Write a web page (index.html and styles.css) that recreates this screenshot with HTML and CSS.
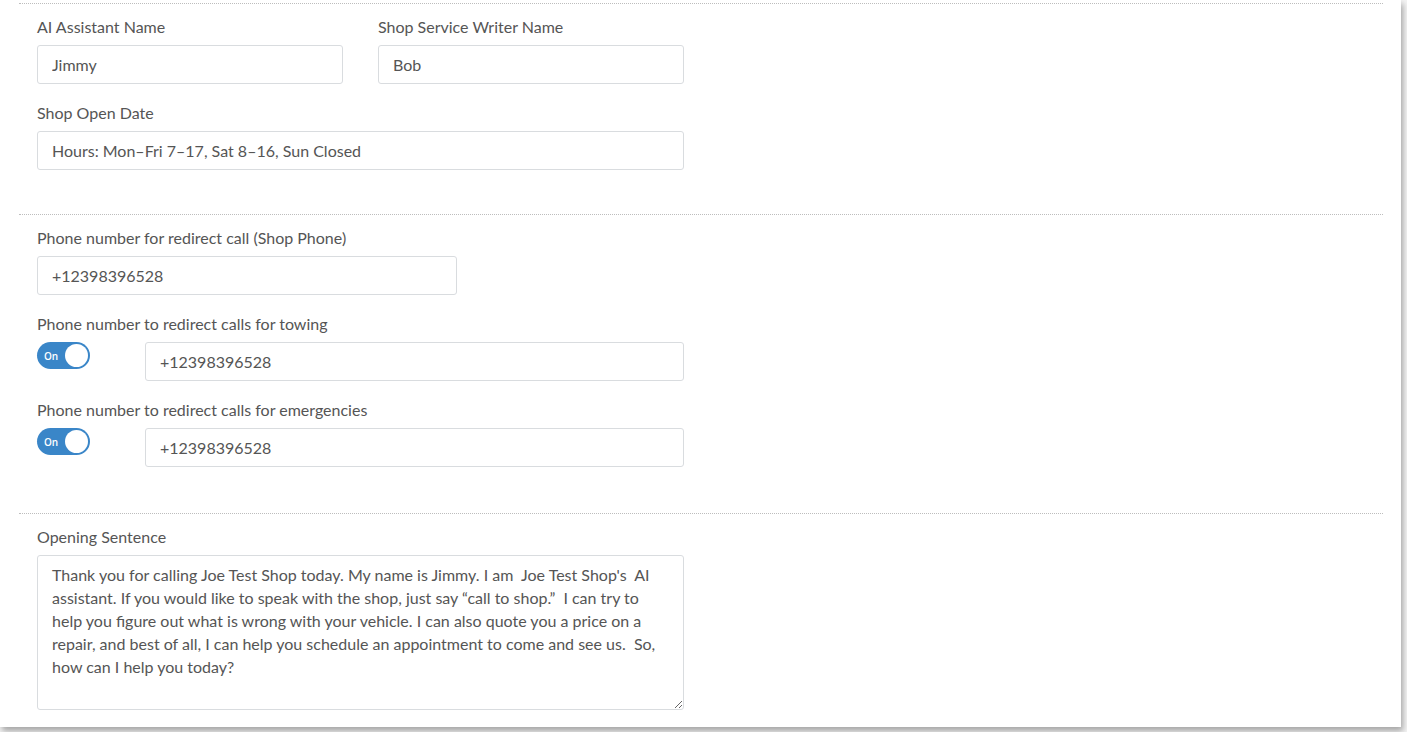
FILE: index.html
```html
<!DOCTYPE html>
<html lang="en">
<head>
<meta charset="utf-8">
<title>AI Assistant Settings</title>
<link rel="stylesheet" href="styles.css">
</head>
<body>
<div class="card">
  <section class="section">
    <div class="form">
      <div class="row-2">
        <div class="field">
          <label class="label">AI Assistant Name</label>
          <input class="input" type="text" value="Jimmy">
        </div>
        <div class="field">
          <label class="label">Shop Service Writer Name</label>
          <input class="input" type="text" value="Bob">
        </div>
      </div>
      <div class="field">
        <label class="label">Shop Open Date</label>
        <input class="input" type="text" value="Hours: Mon–Fri 7–17, Sat 8–16, Sun Closed">
      </div>
    </div>
  </section>

  <section class="section section-phone">
    <div class="form">
      <div class="field">
        <label class="label">Phone number for redirect call (Shop Phone)</label>
        <input class="input input-short" type="text" value="+12398396528">
      </div>
      <div class="field">
        <label class="label">Phone number to redirect calls for towing</label>
        <div class="toggle-row">
          <span class="toggle"><span class="toggle-text">On</span><span class="knob"></span></span>
          <input class="input" type="text" value="+12398396528">
        </div>
      </div>
      <div class="field">
        <label class="label">Phone number to redirect calls for emergencies</label>
        <div class="toggle-row">
          <span class="toggle"><span class="toggle-text">On</span><span class="knob"></span></span>
          <input class="input" type="text" value="+12398396528">
        </div>
      </div>
    </div>
  </section>

  <section class="section section-last">
    <div class="form">
      <div class="field">
        <label class="label">Opening Sentence</label>
        <textarea class="textarea">Thank you for calling Joe Test Shop today. My name is Jimmy. I am  Joe Test Shop's  AI assistant. If you would like to speak with the shop, just say “call to shop.”  I can try to help you figure out what is wrong with your vehicle. I can also quote you a price on a repair, and best of all, I can help you schedule an appointment to come and see us.  So, how can I help you today?</textarea>
      </div>
    </div>
  </section>
</div>
</body>
</html>
```

FILE: styles.css
```css
html, body {
  margin: 0;
  padding: 0;
}

body {
  background: #f3f3f3;
  font-family: Lato, "Open Sans", "Liberation Sans", sans-serif;
  color: #555;
  width: 1407px;
  height: 732px;
  overflow: hidden;
}

.card {
  width: 1401px;
  height: 727px;
  box-sizing: border-box;
  background: #fff;
  padding: 3px 18px 0 19px;
  box-shadow: 2px 4px 6px rgba(0, 0, 0, 0.32);
}

.section {
  border-top: 1px dotted #bdbdbd;
  padding: 13px 0 44px 18px;
}

.section-phone {
  padding-bottom: 46px;
}

.section-last {
  padding-bottom: 0;
}

.form {
  width: 647px;
}

.row-2 {
  display: grid;
  grid-template-columns: 306px 306px;
  column-gap: 35px;
}

.field {
  display: flex;
  flex-direction: column;
  margin-bottom: 19px;
}

.form > .field:last-child {
  margin-bottom: 0;
}

.label {
  font-size: 16px;
  line-height: 20px;
  color: #555;
  margin-bottom: 8px;
}

.input {
  box-sizing: border-box;
  height: 39px;
  width: 100%;
  border: 1px solid #d9dcdf;
  border-radius: 3px;
  padding: 0 14px;
  font-family: Lato, "Open Sans", "Liberation Sans", sans-serif;
  font-size: 16px;
  color: #555;
  background: #fff;
  outline: none;
}

.input-short {
  width: 420px;
}

.toggle-row {
  display: flex;
  align-items: flex-start;
}

.toggle-row .input {
  flex: 1;
}

.toggle {
  position: relative;
  flex: none;
  width: 53px;
  height: 27px;
  margin-right: 55px;
  border-radius: 14px;
  background: #3a86c8;
  display: flex;
  align-items: center;
}

.toggle-text {
  color: #fff;
  font-size: 10px;
  font-weight: 600;
  padding-left: 7px;
  font-family: "Open Sans", "Liberation Sans", sans-serif;
}

.knob {
  position: absolute;
  top: 2px;
  right: 2px;
  width: 23px;
  height: 23px;
  border-radius: 50%;
  background: #fff;
}

.textarea {
  box-sizing: border-box;
  width: 100%;
  height: 155px;
  border: 1px solid #d9dcdf;
  border-radius: 3px;
  padding: 7px 14px;
  font-family: Lato, "Open Sans", "Liberation Sans", sans-serif;
  font-size: 16px;
  line-height: 23px;
  color: #555;
  resize: vertical;
  outline: none;
  display: block;
}
```
